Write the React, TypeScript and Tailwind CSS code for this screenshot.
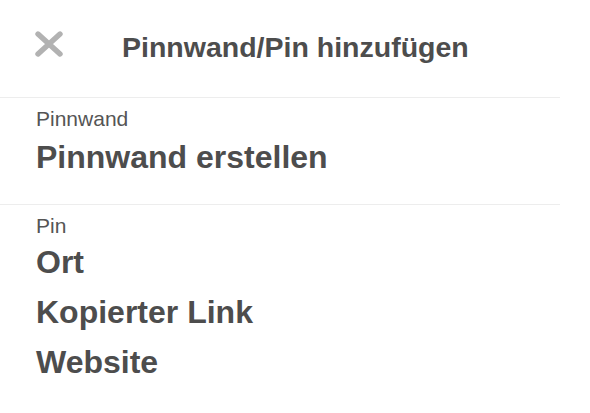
export default function App() {
  const font = { fontFamily: '"Liberation Sans", Arial, sans-serif' };
  return (
    <div className="w-[590px] h-[413px] bg-white overflow-hidden" style={font}>
      <div className="w-[560px]">
        <div className="h-[98px] pt-[27px] pl-[35px] flex items-start border-b border-[#ededed]">
          <svg width="28" height="26" viewBox="0 0 28 26" className="mt-[4px] shrink-0">
            <path d="M3 3 L25 23 M25 3 L3 23" stroke="#b2b2b2" strokeWidth="5.4" strokeLinecap="round" fill="none" />
          </svg>
          <div className="ml-[59px] text-[28.5px] leading-[40px] font-bold text-[#4d4d4d]">Pinnwand/Pin hinzufügen</div>
        </div>
        <div className="pl-[36px] pt-[10px] pb-[22px] border-b border-[#ededed]">
          <div className="text-[21px] leading-[22px] text-[#555555]">Pinnwand</div>
          <div className="mt-[2px] text-[32px] leading-[50px] font-bold text-[#4d4d4d]">Pinnwand erstellen</div>
        </div>
        <div className="pl-[36px] pt-[10px]">
          <div className="text-[21px] leading-[22px] text-[#555555]">Pin</div>
          <div className="text-[32px] leading-[50px] font-bold text-[#4d4d4d]">Ort</div>
          <div className="text-[32px] leading-[50px] font-bold text-[#4d4d4d]">Kopierter Link</div>
          <div className="text-[32px] leading-[50px] font-bold text-[#4d4d4d]">Website</div>
        </div>
      </div>
    </div>
  );
}
